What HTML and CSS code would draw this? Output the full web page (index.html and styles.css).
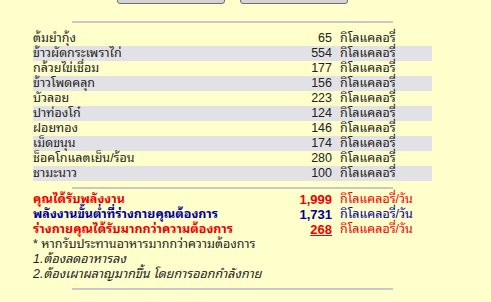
FILE: index.html
```html
<!DOCTYPE html>
<html lang="th">
<head>
<meta charset="utf-8">
<title>พลังงานอาหาร</title>
<link rel="stylesheet" href="styles.css">
</head>
<body>
<div class="page">
  <div class="buttons">
    <span class="btn"></span>
    <span class="btn"></span>
  </div>
  <hr class="rule top">
  <table class="foods">
    <tr><td class="name">ต้มยำกุ้ง</td><td class="num">65</td><td class="unit">กิโลแคลอรี่</td></tr>
    <tr class="alt"><td class="name">ข้าวผัดกระเพราไก่</td><td class="num">554</td><td class="unit">กิโลแคลอรี่</td></tr>
    <tr><td class="name">กล้วยไข่เชื่อม</td><td class="num">177</td><td class="unit">กิโลแคลอรี่</td></tr>
    <tr class="alt"><td class="name">ข้าวโพดคลุก</td><td class="num">156</td><td class="unit">กิโลแคลอรี่</td></tr>
    <tr><td class="name">บัวลอย</td><td class="num">223</td><td class="unit">กิโลแคลอรี่</td></tr>
    <tr class="alt"><td class="name">ปาท่องโก๋</td><td class="num">124</td><td class="unit">กิโลแคลอรี่</td></tr>
    <tr><td class="name">ฝอยทอง</td><td class="num">146</td><td class="unit">กิโลแคลอรี่</td></tr>
    <tr class="alt"><td class="name">เม็ดขนุน</td><td class="num">174</td><td class="unit">กิโลแคลอรี่</td></tr>
    <tr><td class="name">ช็อคโกแลตเย็น/ร้อน</td><td class="num">280</td><td class="unit">กิโลแคลอรี่</td></tr>
    <tr class="alt"><td class="name">ชามะนาว</td><td class="num">100</td><td class="unit">กิโลแคลอรี่</td></tr>
  </table>
  <hr class="rule mid">
  <table class="foods summary">
    <tr class="red"><td class="name b">คุณได้รับพลังงาน</td><td class="num b">1,999</td><td class="unit">กิโลแคลอรี่/วัน</td></tr>
    <tr class="blue"><td class="name b">พลังงานขั้นต่ำที่ร่างกายคุณต้องการ</td><td class="num b">1,731</td><td class="unit">กิโลแคลอรี่/วัน</td></tr>
    <tr class="red"><td class="name b">ร่างกายคุณได้รับมากกว่าความต้องการ</td><td class="num b u">268</td><td class="unit">กิโลแคลอรี่/วัน</td></tr>
  </table>
  <div class="notes">
    <div class="note">* หากรับประทานอาหารมากกว่าความต้องการ</div>
    <div class="note i">1.ต้องลดอาหารลง</div>
    <div class="note i">2.ต้องเผาผลาญมากขึ้น โดยการออกกำลังกาย</div>
  </div>
  <hr class="rule bottom">
</div>
</body>
</html>
```
FILE: styles.css
```css
html, body {
  margin: 0;
  padding: 0;
  background: #ffffcc;
}
body {
  font-family: "Liberation Sans", "Noto Sans Thai Looped", sans-serif;
  font-size: 12.5px;
  color: #222;
  overflow: hidden;
}
.page {
  width: 399px;
  margin-left: 33px;
  margin-top: -18px;
}
.buttons {
  display: flex;
  justify-content: center;
  gap: 15px;
  height: 22px;
}
.btn {
  display: block;
  width: 106px;
  height: 20px;
  background: #d4d4d4;
  border: 1px solid #6e6e6e;
  border-radius: 3px;
}
.rule {
  width: 321px;
  margin: 0 0 0 39px;
  border: 0;
  height: 2px;
  background: #c8c8c8;
}
.rule.top { margin-top: 17px; margin-bottom: 8px; }
.rule.mid { margin-top: 6px; margin-bottom: 3px; }
.rule.bottom { margin-top: 6px; }
.foods {
  width: 399px;
  border-collapse: collapse;
}
.foods td {
  padding: 0;
  height: 15px;
  line-height: 15px;
  white-space: nowrap;
}
.foods .alt td {
  background: #e2e2e6;
}
.name { text-align: left; }
.num {
  text-align: right;
  width: 60px;
}
.num.b { font-size: 13px; }
.unit { width: 92px; padding-left: 8px !important; }
.b { font-weight: bold; }
.u { text-decoration: underline; }
.red td { color: #ee0000; }
.blue td { color: #000099; }
.notes .note {
  height: 15px;
  line-height: 15px;
  white-space: nowrap;
}
.i { font-style: italic; }
```
